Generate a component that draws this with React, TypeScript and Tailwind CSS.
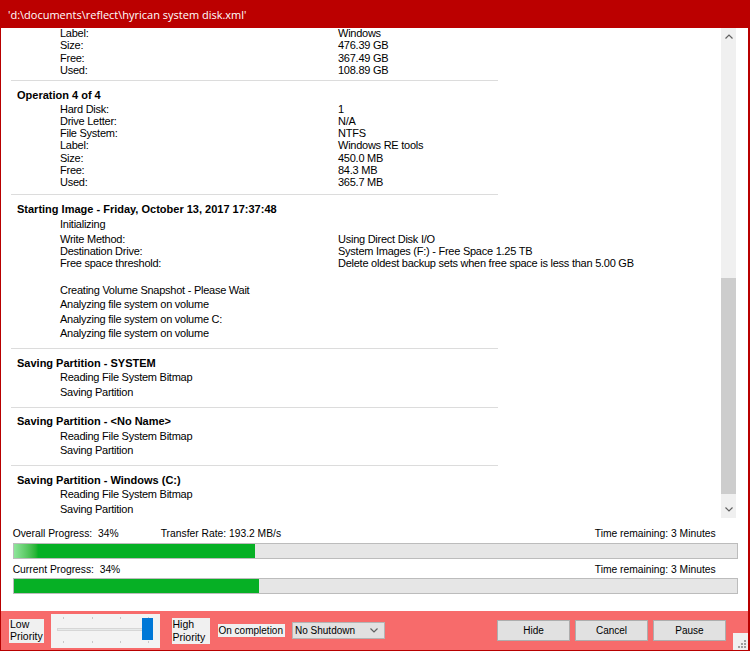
import React from 'react';

type Row = [string, string];

const Sep = () => <div className="h-px w-[487px] bg-[#dcdcdc]" />;

const Table = ({ rows, className = '' }: { rows: Row[]; className?: string }) => (
  <div className={className}>
    {rows.map(([label, value], i) => (
      <div key={i} className="flex h-[12.25px] items-center leading-[12.25px] whitespace-nowrap">
        <span className="ml-[49px] w-[278px]">{label}</span>
        <span>{value}</span>
      </div>
    ))}
  </div>
);

const Heading = ({ text }: { text: string }) => (
  <div className="h-[14.6px] pl-[6px] text-[11px] leading-[14.6px] font-bold tracking-normal whitespace-nowrap">
    {text}
  </div>
);

const Line = ({ text }: { text: string }) => (
  <div className="ml-[49px] h-[14.6px] leading-[14.6px] whitespace-nowrap">{text}</div>
);

const PartitionSection = ({ name }: { name: string }) => (
  <>
    <div className="pt-[6.7px] pb-[6.9px]">
      <Heading text={`Saving Partition - ${name}`} />
      <Line text="Reading File System Bitmap" />
      <Line text="Saving Partition" />
    </div>
    <Sep />
  </>
);

const Chevron = ({ up }: { up?: boolean }) => (
  <svg width="8" height="5" viewBox="0 0 8 5" className="block">
    <polyline
      points={up ? '0.5,4.5 4,1 7.5,4.5' : '0.5,0.5 4,4 7.5,0.5'}
      fill="none"
      stroke="#606060"
      strokeWidth="1.2"
    />
  </svg>
);

const ScrollBar = () => (
  <div className="flex h-full w-[15px] flex-col bg-[#f0f0f0]">
    <div className="flex h-[17px] items-center justify-center">
      <Chevron up />
    </div>
    <div className="h-[233px]" />
    <div className="h-[216px] bg-[#cdcdcd]" />
    <div className="flex-1" />
    <div className="flex h-[17px] items-center justify-center">
      <Chevron />
    </div>
  </div>
);

const ProgressBar = ({ fill, glow }: { fill: string; glow?: boolean }) => (
  <div className="flex h-[16px] w-[725px] border border-[#bcbcbc] bg-[#e6e6e6]">
    <div className={`flex h-full bg-[#06b025] ${fill}`}>
      {glow && <div className="h-full w-[24px] bg-gradient-to-r from-[#8fe59b] to-[#06b025]" />}
    </div>
  </div>
);

const Grip = () => (
  <svg width="15" height="17" viewBox="0 0 15 17" className="block">
    <rect width="15" height="17" fill="#f0f0f0" />
    {[
      [11, 13],
      [8, 13],
      [5, 13],
      [11, 10],
      [8, 10],
      [11, 7],
    ].map(([x, y], i) => (
      <rect key={i} x={x} y={y} width="2" height="2" fill="#9e9e9e" />
    ))}
  </svg>
);

const Slider = () => (
  <div className="relative ml-[6.5px] h-[34px] w-[109px] bg-[#f3f3f3]">
    {[12, 41, 69, 97].map((x) => (
      <React.Fragment key={x}>
        <div className="absolute top-[3px] h-[2px] w-px bg-[#c8c8c8]" style={{ left: x }} />
        <div className="absolute top-[27px] h-[2px] w-px bg-[#c8c8c8]" style={{ left: x }} />
      </React.Fragment>
    ))}
    <div className="absolute top-[14px] left-[6px] h-[3px] w-[92px] border border-[#d6d6d6] bg-[#e7eaea]" />
    <div className="absolute top-[4px] left-[91px] h-[22px] w-[11px] bg-[#0078d7]" />
  </div>
);

export default function App() {
  return (
    <div className="flex h-[651px] w-[750px] flex-col overflow-hidden bg-[#b80000] font-['Liberation_Sans',Arial,sans-serif] text-black">
      {/* title bar */}
      <div className="flex h-[28px] shrink-0 items-center bg-[#bb0000] pt-[2px] pl-[8px] font-['Open_Sans',sans-serif] text-[11px] text-white">
        'd:\documents\reflect\hyrican system disk.xml'
      </div>

      <div className="mr-[2px] mb-px ml-px flex flex-1 flex-col bg-white">
        {/* log + scrollbar */}
        <div className="flex h-[490px] shrink-0">
          <div className="flex-1 overflow-hidden pl-[10px] text-[11px] tracking-[-0.25px]">
            <div className="mt-[-1px]">
              <Table
                className="pb-[4.3px]"
                rows={[
                  ['Label:', 'Windows'],
                  ['Size:', '476.39 GB'],
                  ['Free:', '367.49 GB'],
                  ['Used:', '108.89 GB'],
                ]}
              />
              <Sep />
              <div className="pt-[6.7px] pb-[5.9px]">
                <Heading text="Operation 4 of 4" />
                <Table
                  rows={[
                    ['Hard Disk:', '1'],
                    ['Drive Letter:', 'N/A'],
                    ['File System:', 'NTFS'],
                    ['Label:', 'Windows RE tools'],
                    ['Size:', '450.0 MB'],
                    ['Free:', '84.3 MB'],
                    ['Used:', '365.7 MB'],
                  ]}
                />
              </div>
              <Sep />
              <div className="pt-[6.7px] pb-[7.2px]">
                <Heading text="Starting Image - Friday, October 13, 2017 17:37:48" />
                <Line text="Initializing" />
                <Table
                  className="mt-[1.7px] mb-[13.1px]"
                  rows={[
                    ['Write Method:', 'Using Direct Disk I/O'],
                    ['Destination Drive:', 'System Images (F:) - Free Space 1.25 TB'],
                    ['Free space threshold:', 'Delete oldest backup sets when free space is less than 5.00 GB'],
                  ]}
                />
                <Line text="Creating Volume Snapshot - Please Wait" />
                <Line text="Analyzing file system on volume" />
                <Line text="Analyzing file system on volume C:" />
                <Line text="Analyzing file system on volume" />
              </div>
              <Sep />
              <PartitionSection name="SYSTEM" />
              <PartitionSection name="<No Name>" />
              <PartitionSection name="Windows (C:)" />
            </div>
          </div>
          <div className="mr-[12px]">
            <ScrollBar />
          </div>
        </div>

        {/* progress */}
        <div className="flex flex-1 flex-col pt-[9px] pl-[11.7px] text-[10.3px]">
          <div className="flex h-[13px] w-[725px] items-center leading-[13px] whitespace-pre">
            <span className="w-[148px]">Overall Progress:  34%</span>
            <span>Transfer Rate: 193.2 MB/s</span>
            <span className="mr-[22px] ml-auto">Time remaining: 3 Minutes</span>
          </div>
          <div className="mt-[3px]">
            <ProgressBar fill="w-[241px]" glow />
          </div>
          <div className="mt-[4px] flex h-[13px] w-[725px] items-center leading-[13px] whitespace-pre">
            <span>Current Progress:  34%</span>
            <span className="mr-[22px] ml-auto">Time remaining: 3 Minutes</span>
          </div>
          <div className="mt-[2px]">
            <ProgressBar fill="w-[245px]" />
          </div>
        </div>

        {/* bottom panel */}
        <div className="flex h-[39px] shrink-0 items-center bg-[#f76b6b] pl-[8px] text-[10px]">
          <div className="flex h-[24px] w-[35px] flex-col justify-center bg-[#f0f0f0] pl-px text-[10.5px] leading-[11.6px]">
            <span>Low</span>
            <span>Priority</span>
          </div>
          <Slider />
          <div className="ml-[12px] flex h-[26px] w-[38px] flex-col justify-center bg-[#f0f0f0] pl-px text-[10.5px] leading-[12.6px]">
            <span>High</span>
            <span>Priority</span>
          </div>
          <div className="ml-[8px] h-[13px] w-[67px] bg-[#f0f0f0] pl-px leading-[13px] whitespace-nowrap">
            On completion
          </div>
          <div className="ml-[7.5px] flex h-[17px] w-[93px] items-center justify-between border border-[#b4b4b4] bg-[#e1e1e1] pr-[6px] pl-[2px]">
            <span>No Shutdown</span>
            <Chevron />
          </div>
          <div className="ml-auto flex gap-[5px]">
            {['Hide', 'Cancel', 'Pause'].map((b) => (
              <div
                key={b}
                className="flex h-[21px] w-[73px] items-center justify-center border border-[#adadad] bg-[#e1e1e1]"
              >
                {b}
              </div>
            ))}
          </div>
          <div className="ml-[7px] self-end">
            <Grip />
          </div>
        </div>
      </div>
    </div>
  );
}
